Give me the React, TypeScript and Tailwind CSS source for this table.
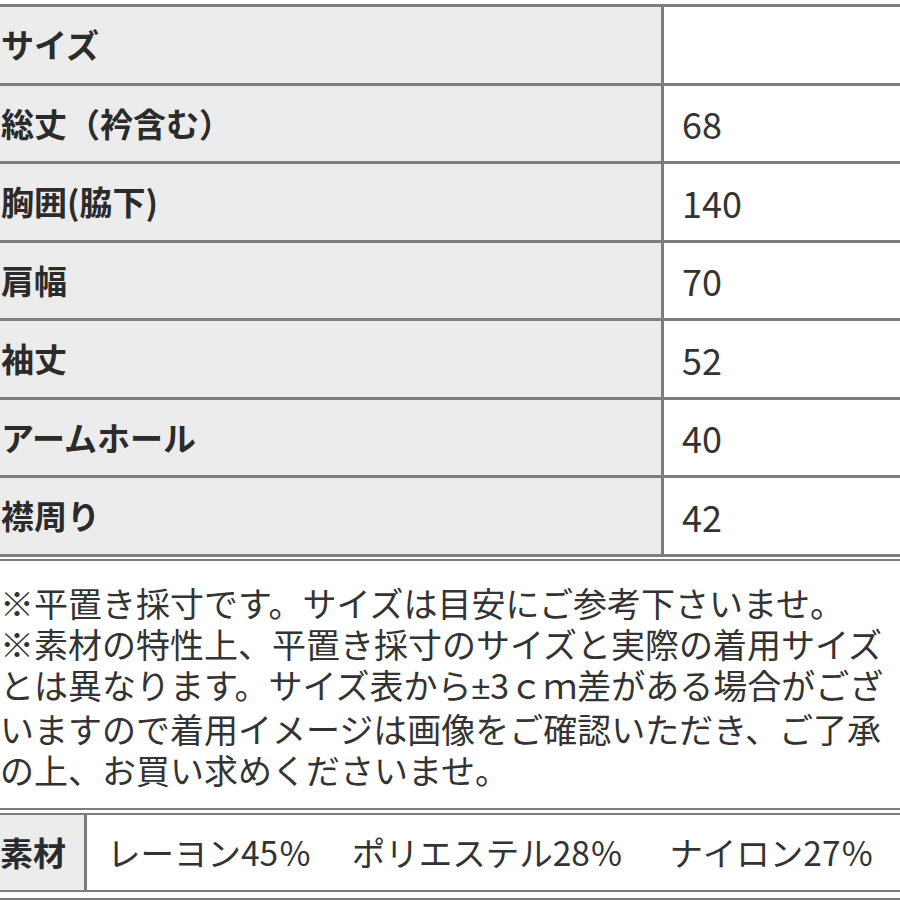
const rows: [string, string][] = [
  ["サイズ", ""],
  ["総丈（衿含む）", "68"],
  ["胸囲(脇下)", "140"],
  ["肩幅", "70"],
  ["袖丈", "52"],
  ["アームホール", "40"],
  ["襟周り", "42"],
];

export default function App() {
  return (
    <div className="w-[900px] h-[900px] overflow-hidden bg-white pt-[4px] font-['Noto_Sans_CJK_JP',sans-serif] text-[#2b2b2b]">
      {/* size table */}
      <div className="border-t-[3px] border-[#7d7d7d]">
        {rows.map(([label, value]) => (
          <div
            key={label}
            className="flex h-[78.5px] border-b-[3px] border-[#7d7d7d]"
          >
            <div className="w-[664px] shrink-0 flex items-center pl-[1px] bg-[#ececec] border-r-[3px] border-[#7d7d7d] text-[33px] font-bold leading-none">
              {label}
            </div>
            <div className="flex-1 flex items-center pl-[18px] text-[36px] leading-none text-[#333]">
              {value}
            </div>
          </div>
        ))}
      </div>
      <div className="mt-[2px] h-[2px] bg-[#7d7d7d]" />

      {/* notes */}
      <div className="mt-[21px] text-[34px] leading-[41px] text-[#333] whitespace-nowrap">
        <div>※平置き採寸です。サイズは目安にご参考下さいませ。</div>
        <div>※素材の特性上、平置き採寸のサイズと実際の着用サイズ</div>
        <div>
          とは異なります。サイズ表から
          <span className="font-['Liberation_Sans',sans-serif]">±</span>
          3ｃｍ差がある場合がござ
        </div>
        <div>いますので着用イメージは画像をご確認いただき、ご了承</div>
        <div>の上、お買い求めくださいませ。</div>
      </div>

      {/* material table */}
      <div className="mt-[18px] border-t-2 border-[#7d7d7d] pt-[3px]">
        <div className="flex h-[79px] border-y-2 border-[#7d7d7d]">
          <div className="w-[87px] shrink-0 flex items-center bg-[#ececec] border-r-[3px] border-[#7d7d7d] text-[33px] font-bold leading-none">
            素材
          </div>
          <div className="flex-1 flex items-center pl-[20px] text-[33.5px] leading-none text-[#333] whitespace-nowrap">
            <span>レーヨン45％</span>
            <span className="ml-[40px]">ポリエステル28％</span>
            <span className="ml-[46px]">ナイロン27％</span>
          </div>
        </div>
        <div className="mt-[6px] h-[2px] bg-[#7d7d7d]" />
      </div>
    </div>
  );
}
